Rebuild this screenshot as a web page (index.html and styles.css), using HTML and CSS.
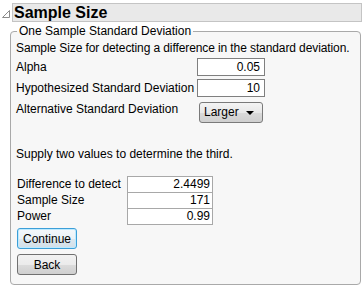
FILE: index.html
```html
<!DOCTYPE html>
<html lang="en">
<head>
    <meta charset="UTF-8">
    <title>Sample Size</title>
    <link rel="stylesheet" href="styles.css">
</head>
<body>
<div class="header">
    <svg class="toggle" width="12" height="12" viewBox="0 0 12 12">
        <polygon points="2.5,10.5 9.5,3.5 9.5,10.5" fill="#fff" stroke="#8a8a8a" stroke-width="1"/>
    </svg>
    <div class="title">Sample Size</div>
</div>

<fieldset class="group">
    <legend>One Sample Standard Deviation</legend>
    <div class="desc">Sample Size for detecting a difference in the standard deviation.</div>

    <div class="form">
        <span class="label">Alpha</span>
        <div class="field">0.05</div>
        <span class="label">Hypothesized Standard Deviation</span>
        <div class="field">10</div>
        <span class="label alt">Alternative Standard Deviation</span>
        <div class="select">Larger <span class="arrow"></span></div>
    </div>

    <div class="supply">Supply two values to determine the third.</div>

    <div class="table">
        <span class="cell-label">Difference to detect</span>
        <div class="cell">2.4499</div>
        <span class="cell-label">Sample Size</span>
        <div class="cell">171</div>
        <span class="cell-label">Power</span>
        <div class="cell">0.99</div>
    </div>

    <button class="btn focused">Continue</button>
    <button class="btn">Back</button>
</fieldset>
</body>
</html>
```

FILE: styles.css
```css
body {
    margin: 0;
    background: #fff;
    font-family: "Liberation Sans", Arial, sans-serif;
    font-size: 12px;
    color: #000;
}

.header { display: flex; align-items: flex-start; margin: 3px 1px 0 0; }
.toggle { margin: 4px 0 0 0; flex: none; }
.title {
    flex: 1;
    height: 17px;
    line-height: 17px;
    background: #e9e9e9;
    border: 1px solid #c4c4c4;
    padding-left: 1px;
    font-weight: bold;
    font-size: 16px;
}

.group {
    margin: 2px 2px 0 10px;
    padding: 2px 5px 9px 5px;
    border: 1px solid #a9a9a9;
    border-radius: 4px;
    background: #f7f7f7;
    min-width: 0;
}
.group legend {
    padding: 0 2px;
    margin-left: 1px;
    line-height: 14px;
    font-size: 12px;
}

.desc { line-height: 16px; white-space: nowrap; letter-spacing: -0.1px; }

.form {
    display: grid;
    grid-template-columns: 181px 68px;
    row-gap: 3px;
    margin-top: 2px;
    align-items: center;
}
.label { line-height: 16px; }
.label.alt { align-self: start; margin-top: 1px; }

.field {
    box-sizing: border-box;
    height: 18px;
    line-height: 16px;
    border: 1px solid #7f7f7f;
    background: #fff;
    text-align: right;
    padding-right: 4px;
}

.select {
    box-sizing: border-box;
    width: 64px;
    height: 21px;
    margin: 2px 0 0 2px;
    border: 1px solid #7a7a7a;
    border-radius: 3px;
    background: linear-gradient(#f4f4f4, #e8e8e8 50%, #dadada 51%, #cfcfcf);
    line-height: 19px;
    padding-left: 4px;
    display: flex;
    align-items: center;
}
.arrow {
    margin-left: auto;
    margin-right: 8px;
    width: 0;
    height: 0;
    border-left: 4px solid transparent;
    border-right: 4px solid transparent;
    border-top: 4px solid #000;
}

.supply { line-height: 16px; margin-top: 23px; }

.table {
    display: grid;
    grid-template-columns: 111px 86px;
    grid-auto-rows: 16px;
    margin-top: 14px;
}
.cell-label { line-height: 16px; padding-left: 1px; }
.cell {
    box-sizing: border-box;
    height: 17px;
    border: 1px solid #a8a8a8;
    background: #fff;
    text-align: right;
    line-height: 15px;
    padding-right: 2px;
}

.btn {
    display: block;
    box-sizing: border-box;
    width: 60px;
    height: 21px;
    margin: 4px 0 0 1px;
    padding: 0;
    font-family: inherit;
    font-size: 12px;
    color: #000;
    border: 1px solid #707070;
    border-radius: 3px;
    background: linear-gradient(#f2f2f2, #ebebeb 50%, #dcdcdc 51%, #cfcfcf);
}
.btn.focused {
    border-color: #3c9fd8;
    box-shadow: inset 0 0 0 1px #bdeaff;
    background: linear-gradient(#f4f8fb, #ebf2f7 50%, #dde8ef 51%, #d2dfe8);
}
.btn + .btn { margin-top: 5px; }
```
